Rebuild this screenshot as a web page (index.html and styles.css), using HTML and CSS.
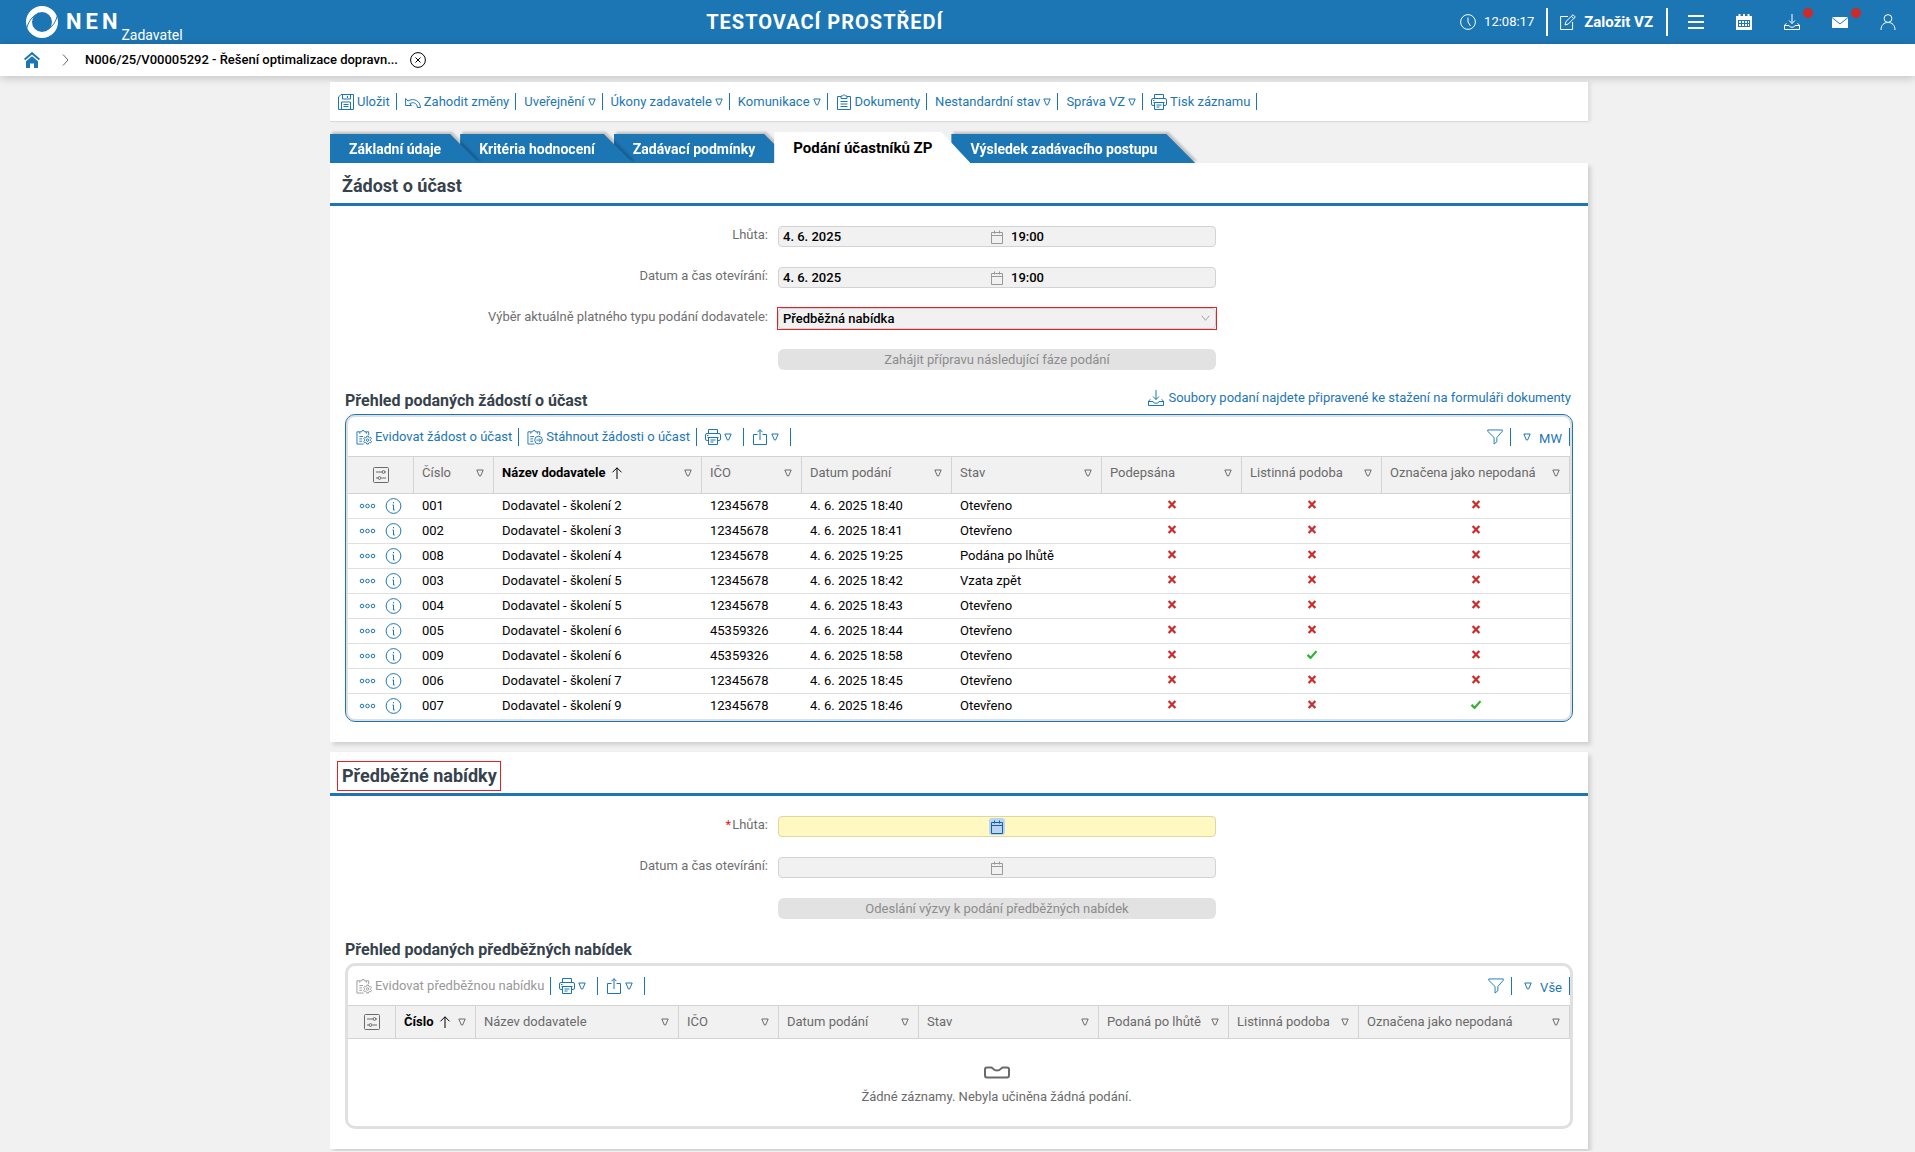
FILE: index.html
```html
<!DOCTYPE html>
<html lang="cs">

<head>
  <meta charset="UTF-8">
  <meta name="viewport" content="width=device-width, initial-scale=1">
  <title>NEN - Podání účastníků ZP</title>
  <link rel="stylesheet" href="styles.css">
</head>

<body>
  <svg class="sprite" aria-hidden="true">
    <symbol id="i-tri" viewBox="0 0 8 8">
      <path d="M.8 1h6.4L4.6 7H3.4z" />
    </symbol>
    <symbol id="i-save" viewBox="0 0 16 16">
      <path d="M3 .5h12.500v15H.5V3zM4.500.5v4.500h8V.5M9.500 2v2M3.500 15.500V8h9v7.500M5.500 10.500h5M5.500 12.500h5" />
    </symbol>
    <symbol id="i-undo" viewBox="0 0 16 16">
      <path d="M.6 4.500v7h6L4.800 9.700C8 7.500 12 9 12.500 13.500h2.900C15.500 7 8.500 3.500 3 7z" />
    </symbol>
    <symbol id="i-doc" viewBox="0 0 14 16">
      <path d="M4 2.500H.5v13h13v-13H10M4 4.500V2h1.500L7 .5 8.500 2H10v2.500zM3.500 7.500h7M3.500 10h7M3.500 12.500h7" />
    </symbol>
    <symbol id="i-print" viewBox="0 0 16 16">
      <path d="M3.500 4.500v-4h9v4M3.500 11.500H2A1.500 1.500 0 0 1 .5 10V6A1.500 1.500 0 0 1 2 4.500h12A1.500 1.500 0 0 1 15.500 6v4a1.500 1.500 0 0 1-1.500 1.500h-1.500M3.500 8.500h9v7h-9zM5.500 11h5M5.500 13h3M2 6.500h1.500M2.500 8.500h11" />
    </symbol>
    <symbol id="i-share" viewBox="0 0 14 16">
      <path d="M4.500 5.500h-4v10h13v-10h-4M7 11V.8M4.500 3.200 7 .7l2.500 2.500" />
    </symbol>
    <symbol id="i-clip-gear" viewBox="0 0 17 16">
      <path d="M4 2.500H1v13h7M4 4.500v-2h2A1.500 1.500 0 0 1 9 2.500h2v2M11 2.500h2.500V6M3.500 7.500h4M3.500 10h3M3.500 12.500h3" />
      <circle cx="12.300" cy="11.300" r="1.300" />
      <path d="m11.500 7-.2 1.200-1 .6-1.200-.4-.9 1.500.9.800v1.200l-.9.800.9 1.500 1.200-.4 1 .6.200 1.100h1.700l.2-1.100 1-.6 1.200.4.800-1.500-.9-.8v-1.200l.9-.8-.8-1.500-1.200.4-1-.6-.2-1.200z" />
    </symbol>
    <symbol id="i-clip-arrow" viewBox="0 0 17 16">
      <path d="M4 2.500H1v13h7M4 4.500v-2h2A1.500 1.500 0 0 1 9 2.500h2v2M11 2.500h2.500V6M3.500 7.500h4M3.500 10h3M3.500 12.500h3" />
      <circle cx="12.300" cy="11.300" r="4.100" />
      <path d="M10 11.300h4.500M12.800 9.500l1.800 1.800-1.800 1.800" />
    </symbol>
    <symbol id="i-download" viewBox="0 0 16 16">
      <path d="M8 0v9.500M5 6.500l3 3 3-3M2.500 9.500.5 11v4.500h15V11l-2-1.500M.5 11.500H5c.3 1.300 1.500 1.700 3 1.700s2.700-.4 3-1.700h4.500" />
    </symbol>
    <symbol id="i-funnel" viewBox="0 0 17 17">
      <path d="M.8 1h15.400v1.500L10.500 9v4.500L7.500 16V9L.8 2.500z" />
    </symbol>
    <symbol id="i-options" viewBox="0 0 16 16">
      <rect x=".5" y=".5" width="15" height="15" rx="1" />
      <path d="M3 5h6M12 5h1M3 11h2M8.500 11H13" />
      <circle cx="10.500" cy="5" r="1.400" />
      <circle cx="6.500" cy="11" r="1.400" />
    </symbol>
    <symbol id="i-up" viewBox="0 0 12 12">
      <path d="M6 12V.8M1.500 5.300 6 .8l4.500 4.500" />
    </symbol>
    <symbol id="i-more" viewBox="0 0 16 6">
      <circle cx="2.500" cy="3" r="1.800" />
      <circle cx="8" cy="3" r="1.800" />
      <circle cx="13.500" cy="3" r="1.800" />
    </symbol>
    <symbol id="i-info" viewBox="0 0 16 16">
      <circle cx="8" cy="8" r="7.400" />
      <path d="M8 4v1.300M7 7h1v5h1.200" />
    </symbol>
    <symbol id="i-cal" viewBox="0 0 12 14">
      <path d="M.5 2.500h11v11H.5zM.5 5.500h11M3.500.5v3M8.500.5v3" />
    </symbol>
    <symbol id="i-x" viewBox="0 0 8 8">
      <path d="m1 .8 6 6.400M7 .8 1 7.200" />
    </symbol>
    <symbol id="i-check" viewBox="0 0 10 8">
      <path d="m1 4.300 2.700 2.700L9 1" />
    </symbol>
  </svg>

  <header class="topbar">
    <a class="brand" href="#">
      <svg class="brand__mark" viewBox="0 0 32 32" aria-hidden="true">
        <circle cx="16" cy="16" r="13" />
        <path d="M0 25C2 16 5 11 13 7M32 7c-2 9-5 14-13 18" />
      </svg>
      <span class="brand__name">NEN</span>
      <span class="brand__role">Zadavatel</span>
    </a>
    <p class="topbar__env">TESTOVACÍ PROSTŘEDÍ</p>
    <div class="topbar__tools">
      <div class="clock">
        <svg class="icon" viewBox="0 0 16 16" aria-hidden="true">
          <circle cx="8" cy="8" r="7.400" />
          <path d="M8 3.500V8l2.500 4" />
        </svg>
        <time>12:08:17</time>
      </div>
      <button class="create" type="button">
        <svg class="icon" viewBox="0 0 16 16" aria-hidden="true">
          <path d="M8 2.500H.6v13h12V8M5 11l1-3.500L13 .7l2.300 2.300-7 7zM11.500 2.300l2.300 2.300" />
        </svg>
        Založit VZ
      </button>
      <button class="tool" type="button" aria-label="Menu">
        <svg class="icon icon--thick" viewBox="0 0 16 16" aria-hidden="true">
          <path d="M0 2h16M0 8h16M0 14h16" />
        </svg>
      </button>
      <button class="tool" type="button" aria-label="Kalendář">
        <svg class="icon" viewBox="0 0 16 16" aria-hidden="true">
          <path class="solid" d="M0 2h16v14H0z" />
          <path class="solid" d="M2.500 0h2v2h-2zM7 0h2v2H7zM11.500 0h2v2h-2z" />
          <path class="cut" d="M2 6.500h12M2 9.500h12M2 12.500h12M2.500 6v7M5.500 6v7M8.500 6v7M11.500 6v7M13.500 6v7" />
        </svg>
      </button>
      <button class="tool" type="button" aria-label="Stažené soubory">
        <svg class="icon" aria-hidden="true"><use href="#i-download" /></svg>
        <span class="dot"></span>
      </button>
      <button class="tool" type="button" aria-label="Zprávy">
        <svg class="icon" viewBox="0 0 16 16" aria-hidden="true">
          <path class="solid" d="M0 3h16v11H0z" />
          <path class="cut" d="m0 3.500 8 6.500 8-6.500" />
        </svg>
        <span class="dot"></span>
      </button>
      <button class="tool" type="button" aria-label="Uživatel">
        <svg class="icon" viewBox="0 0 16 16" aria-hidden="true">
          <circle cx="8" cy="4.500" r="3.900" />
          <path d="M1 16c0-5 3-7.500 7-7.500s7 2.500 7 7.500" />
        </svg>
      </button>
    </div>
  </header>

  <nav class="crumbs" aria-label="Drobečková navigace">
    <a class="crumbs__home" href="#" aria-label="Domů">
      <svg viewBox="0 0 16 16" aria-hidden="true">
        <path class="roof" d="M.6 7.500 8 1.200l7.400 6.300" />
        <path d="M2 9.300 8 4.300l6 5V16h-4v-4.500H6V16H2z" />
      </svg>
    </a>
    <svg class="crumbs__sep" viewBox="0 0 6 12" aria-hidden="true">
      <path d="M.5.5 5.500 6l-5 5.500" />
    </svg>
    <a class="crumbs__item" href="#">N006/25/V00005292 - Řešení optimalizace dopravn...</a>
    <button class="crumbs__close" type="button" aria-label="Zavřít">
      <svg viewBox="0 0 16 16" aria-hidden="true">
        <circle cx="8" cy="8" r="7.400" />
        <path d="m5.500 5.500 5 5M10.500 5.500l-5 5" />
      </svg>
    </button>
  </nav>

  <main class="page">
    <div class="actions">
      <button type="button"><svg class="icon"><use href="#i-save" /></svg>Uložit</button>
      <button type="button"><svg class="icon"><use href="#i-undo" /></svg>Zahodit změny</button>
      <button type="button">Uveřejnění<svg class="tri"><use href="#i-tri" /></svg></button>
      <button type="button">Úkony zadavatele<svg class="tri"><use href="#i-tri" /></svg></button>
      <button type="button">Komunikace<svg class="tri"><use href="#i-tri" /></svg></button>
      <button type="button"><svg class="icon"><use href="#i-doc" /></svg>Dokumenty</button>
      <button type="button">Nestandardní stav<svg class="tri"><use href="#i-tri" /></svg></button>
      <button type="button">Správa VZ<svg class="tri"><use href="#i-tri" /></svg></button>
      <button type="button"><svg class="icon"><use href="#i-print" /></svg>Tisk záznamu</button>
    </div>

    <nav class="tabs" aria-label="Záložky">
      <div class="tab tab--first"><a href="#">Základní údaje</a></div>
      <div class="tab tab--second"><a href="#">Kritéria hodnocení</a></div>
      <div class="tab"><a href="#">Zadávací podmínky</a></div>
      <div class="tab tab--active"><a href="#" aria-current="page">Podání účastníků ZP</a></div>
      <div class="tab"><a href="#">Výsledek zadávacího postupu</a></div>
    </nav>

    <section class="panel">
      <header class="panel__head">
        <h2>Žádost o účast</h2>
      </header>
      <form class="form">
        <div class="form__row">
          <label for="lhuta1">Lhůta:</label>
          <div class="datetime">
            <input type="text" id="lhuta1" value="4. 6. 2025" readonly>
            <button type="button" aria-label="Vybrat datum" disabled><svg><use href="#i-cal" /></svg></button>
            <input type="text" value="19:00" aria-label="Čas" readonly>
          </div>
        </div>
        <div class="form__row">
          <label for="otevirani1">Datum a čas otevírání:</label>
          <div class="datetime">
            <input type="text" id="otevirani1" value="4. 6. 2025" readonly>
            <button type="button" aria-label="Vybrat datum" disabled><svg><use href="#i-cal" /></svg></button>
            <input type="text" value="19:00" aria-label="Čas" readonly>
          </div>
        </div>
        <div class="form__row">
          <label for="typ">Výběr aktuálně platného typu podání dodavatele:</label>
          <div class="choice">
            <select id="typ">
              <option>Předběžná nabídka</option>
            </select>
            <svg viewBox="0 0 10 6" aria-hidden="true"><path d="m.8.5 4.200 5 4.200-5" /></svg>
          </div>
        </div>
        <div class="form__row">
          <button class="submit" type="button" disabled>Zahájit přípravu následující fáze podání</button>
        </div>
      </form>

      <div class="list-head">
        <h3>Přehled podaných žádostí o účast</h3>
        <a class="files" href="#"><svg class="icon"><use href="#i-download" /></svg>Soubory podaní najdete připravené ke stažení na formuláři dokumenty</a>
      </div>

      <div class="grid grid--active">
        <div class="grid__bar">
          <button type="button"><svg class="icon"><use href="#i-clip-gear" /></svg>Evidovat žádost o účast</button>
          <button type="button"><svg class="icon"><use href="#i-clip-arrow" /></svg>Stáhnout žádosti o účast</button>
          <button class="menu" type="button" aria-label="Tisk"><svg class="icon"><use href="#i-print" /></svg><svg class="tri"><use href="#i-tri" /></svg></button>
          <button class="menu" type="button" aria-label="Export"><svg class="icon"><use href="#i-share" /></svg><svg class="tri"><use href="#i-tri" /></svg></button>
          <button class="filter" type="button" aria-label="Filtr"><svg class="icon"><use href="#i-funnel" /></svg></button>
          <button class="view" type="button"><svg class="tri"><use href="#i-tri" /></svg><span>MW</span></button>
        </div>
        <table>
          <colgroup>
            <col class="w66">
            <col class="w80">
            <col class="w208">
            <col class="w100">
            <col class="w150">
            <col class="w150">
            <col class="w140">
            <col class="w140">
            <col>
          </colgroup>
          <thead>
            <tr>
              <th class="opts"><svg class="icon"><use href="#i-options" /></svg></th>
              <th><div>Číslo<svg class="tri"><use href="#i-tri" /></svg></div></th>
              <th class="sorted"><div>Název dodavatele<svg class="up"><use href="#i-up" /></svg><svg class="tri"><use href="#i-tri" /></svg></div></th>
              <th><div>IČO<svg class="tri"><use href="#i-tri" /></svg></div></th>
              <th><div>Datum podání<svg class="tri"><use href="#i-tri" /></svg></div></th>
              <th><div>Stav<svg class="tri"><use href="#i-tri" /></svg></div></th>
              <th><div>Podepsána<svg class="tri"><use href="#i-tri" /></svg></div></th>
              <th><div>Listinná podoba<svg class="tri"><use href="#i-tri" /></svg></div></th>
              <th><div>Označena jako nepodaná<svg class="tri"><use href="#i-tri" /></svg></div></th>
            </tr>
          </thead>
          <tbody id="rows"></tbody>
        </table>
      </div>
    </section>

    <section class="panel panel--next">
      <header class="panel__head">
        <h2 class="marked">Předběžné nabídky</h2>
      </header>
      <form class="form">
        <div class="form__row">
          <label for="lhuta2"><span class="req">*</span>Lhůta:</label>
          <div class="datetime datetime--required">
            <input type="text" id="lhuta2">
            <button type="button" aria-label="Vybrat datum"><svg><use href="#i-cal" /></svg></button>
            <input type="text" aria-label="Čas">
          </div>
        </div>
        <div class="form__row">
          <label for="otevirani2">Datum a čas otevírání:</label>
          <div class="datetime">
            <input type="text" id="otevirani2" readonly>
            <button type="button" aria-label="Vybrat datum" disabled><svg><use href="#i-cal" /></svg></button>
            <input type="text" aria-label="Čas" readonly>
          </div>
        </div>
        <div class="form__row">
          <button class="submit" type="button" disabled>Odeslání výzvy k podání předběžných nabídek</button>
        </div>
      </form>

      <div class="list-head">
        <h3>Přehled podaných předběžných nabídek</h3>
      </div>

      <div class="grid">
        <div class="grid__bar">
          <button type="button" disabled><svg class="icon"><use href="#i-clip-gear" /></svg>Evidovat předběžnou nabídku</button>
          <button class="menu" type="button" aria-label="Tisk"><svg class="icon"><use href="#i-print" /></svg><svg class="tri"><use href="#i-tri" /></svg></button>
          <button class="menu" type="button" aria-label="Export"><svg class="icon"><use href="#i-share" /></svg><svg class="tri"><use href="#i-tri" /></svg></button>
          <button class="filter" type="button" aria-label="Filtr"><svg class="icon"><use href="#i-funnel" /></svg></button>
          <button class="view" type="button"><svg class="tri"><use href="#i-tri" /></svg><span>Vše</span></button>
        </div>
        <table class="low">
          <colgroup>
            <col class="w48">
            <col class="w80">
            <col class="w203">
            <col class="w100">
            <col class="w140">
            <col class="w180">
            <col class="w130">
            <col class="w130">
            <col>
          </colgroup>
          <thead>
            <tr>
              <th class="opts"><svg class="icon"><use href="#i-options" /></svg></th>
              <th class="sorted"><div>Číslo<svg class="up"><use href="#i-up" /></svg><svg class="tri"><use href="#i-tri" /></svg></div></th>
              <th><div>Název dodavatele<svg class="tri"><use href="#i-tri" /></svg></div></th>
              <th><div>IČO<svg class="tri"><use href="#i-tri" /></svg></div></th>
              <th><div>Datum podání<svg class="tri"><use href="#i-tri" /></svg></div></th>
              <th><div>Stav<svg class="tri"><use href="#i-tri" /></svg></div></th>
              <th><div>Podaná po lhůtě<svg class="tri"><use href="#i-tri" /></svg></div></th>
              <th><div>Listinná podoba<svg class="tri"><use href="#i-tri" /></svg></div></th>
              <th><div>Označena jako nepodaná<svg class="tri"><use href="#i-tri" /></svg></div></th>
            </tr>
          </thead>
        </table>
        <div class="empty">
          <svg viewBox="0 0 26 12" aria-hidden="true">
            <path d="M3 1h4c2 0 2 3 6 3s4-3 6-3h4c1.500 0 2 .5 2 2v6c0 1.500-.5 2-2 2H3c-1.500 0-2-.5-2-2V3c0-1.500.5-2 2-2z" />
          </svg>
          <p>Žádné záznamy. Nebyla učiněna žádná podání.</p>
        </div>
      </div>
    </section>
  </main>

  <script src="script.js"></script>
</body>

</html>
```

FILE: styles.css
```css
* {
  margin: 0;
  padding: 0;
  box-sizing: border-box;
}

body {
  background-color: #f1f1f1;
  font-family: Roboto, "Liberation Sans", sans-serif;
  font-size: 13px;
  line-height: 16px;
  color: #000;
}

a {
  color: inherit;
  text-decoration: none;
}

button,
input,
select {
  font: inherit;
  color: inherit;
  background: none;
  border: 0;
  border-radius: 0;
}

button {
  cursor: pointer;
}

button:disabled {
  cursor: default;
}

svg {
  flex: none;
  fill: none;
  stroke: currentColor;
}

.sprite {
  display: none;
}

.icon {
  width: 16px;
  height: 16px;
}

.icon--thick {
  stroke-width: 2;
}

.tri {
  width: 8px;
  height: 8px;
}

/* horní lišta */
.topbar {
  display: flex;
  align-items: center;
  height: 44px;
  padding: 0 11px 0 26px;
  background-color: #1d76b4;
  color: #fff;
}

.brand {
  display: flex;
  align-items: center;
  align-self: stretch;
}

.brand__mark {
  width: 32px;
  height: 32px;
}

.brand__mark circle {
  stroke-width: 6;
}

.brand__mark path {
  stroke: #1d76b4;
}

.brand__name {
  margin-left: 8px;
  font-size: 22px;
  font-weight: 700;
  letter-spacing: 4px;
}

.brand__role {
  align-self: flex-end;
  font-size: 14px;
  line-height: 18px;
}

.topbar__env {
  flex: 1;
  padding-left: 7px;
  font-size: 20px;
  font-weight: 700;
  letter-spacing: 1px;
  text-align: center;
}

.topbar__tools {
  display: flex;
  align-items: center;
}

.topbar__tools .solid {
  fill: #fff;
  stroke: none;
}

.topbar__tools .cut {
  stroke: #1d76b4;
}

.clock {
  display: flex;
  align-items: center;
  gap: 8px;
  margin-right: 12px;
}

.create {
  display: flex;
  align-items: center;
  gap: 8px;
  height: 28px;
  padding: 0 13px 0 12px;
  border-left: 2px solid #fff;
  border-right: 2px solid #fff;
  font-size: 15px;
  font-weight: 700;
}

.tool {
  position: relative;
  display: flex;
  align-items: center;
  justify-content: center;
  width: 48px;
  height: 44px;
}

.tool:last-child {
  width: 32px;
  margin-left: 8px;
}

.create + .tool {
  margin-left: 4px;
}

.dot {
  position: absolute;
  top: 8px;
  right: 3px;
  width: 10px;
  height: 10px;
  border-radius: 50%;
  background-color: #cf2a2a;
}

/* drobečková navigace */
.crumbs {
  display: flex;
  align-items: center;
  height: 32px;
  padding-left: 24px;
  background-color: #fff;
  box-shadow: 0 2px 10px #0003;
}

.crumbs__home svg {
  display: block;
  width: 16px;
  height: 16px;
  fill: #1d76b4;
  stroke: none;
}

.crumbs__home .roof {
  fill: none;
  stroke: #1d76b4;
  stroke-width: 2;
}

.crumbs__sep {
  width: 7px;
  height: 12px;
  margin: 0 16px 0 22px;
  color: #666;
}

.crumbs__item {
  font-weight: 500;
}

.crumbs__close {
  margin-left: 12px;
}

.crumbs__close svg {
  display: block;
  width: 16px;
  height: 16px;
}

/* obsah */
.page {
  max-width: 1261px;
  margin: 6px auto 2px;
  padding-left: 3px;
}

.actions {
  display: flex;
  align-items: center;
  height: 40px;
  border-bottom: 1px solid #dcdcdc;
  background-color: #fff;
  box-shadow: 3px 0 3px #0001;
  color: #1d76b4;
}

.actions button,
.grid__bar button {
  display: flex;
  align-items: center;
  gap: 3px;
  padding: 0 6px 0 8px;
  border-right: 1px solid #1d76b4;
  white-space: nowrap;
}

.actions button {
  height: 17px;
}

/* záložky */
.tabs {
  display: flex;
  align-items: flex-end;
  margin-top: 10px;
}

.tab {
  position: relative;
  margin-right: -19px;
  filter: drop-shadow(2px -2px 1px #0003);
}

.tab--first {
  z-index: 2;
}

.tab--second {
  z-index: 1;
}

.tab a {
  display: block;
  height: 29px;
  padding: 0 38px 0 19px;
  background-color: #1d76b4;
  clip-path: polygon(0 0, calc(100% - 29px) 0, 100% 100%, 0 100%);
  font-size: 14px;
  font-weight: 700;
  line-height: 30px;
  color: #fff;
}

.tab--active {
  z-index: 3;
  filter: none;
}

.tab--active a {
  height: 31px;
  background-color: #fff;
  font-size: 15px;
  line-height: 32px;
  color: #000;
}

.panel {
  padding-bottom: 20px;
  background-color: #fff;
  box-shadow: 3px 3px 4px #0002;
}

.panel--next {
  margin-top: 10px;
  padding-top: 1px;
}

.panel__head {
  display: flex;
  align-items: flex-start;
  height: 43px;
  padding: 9px 8px 0;
  border-bottom: 3px solid #1d76b4;
}

.panel__head h2 {
  padding: 0 4px;
  font-size: 18px;
  font-weight: 700;
  line-height: 28px;
  color: #36424c;
}

.panel__head .marked {
  padding: 0 3px 0 4px;
  outline: 1px solid #e32227;
}

.form {
  display: grid;
  gap: 20px;
  padding-top: 20px;
}

.form__row {
  display: grid;
  grid-template-columns: minmax(0, 438fr) minmax(0, 438fr) minmax(0, 362fr);
  column-gap: 10px;
  height: 21px;
}

.form__row label {
  line-height: 17px;
  text-align: right;
  color: #6e6e6e;
}

.req {
  margin-right: 1px;
  color: #d9251d;
}

.datetime {
  display: grid;
  grid-template-columns: 1fr 16px 1fr;
  align-items: center;
  border: 1px solid #d3d3d3;
  border-radius: 4px;
  background-color: #f1f1f1;
}

.datetime input {
  width: 100%;
  padding: 0 4px;
  font-weight: 500;
}

.datetime button + input {
  padding-left: 6px;
}

.datetime button {
  display: grid;
  place-items: center;
  height: 17px;
  color: #999;
}

.datetime svg {
  width: 12px;
  height: 14px;
}

.datetime--required {
  border-color: #ddd7a4;
  background-color: #fff8c1;
}

.datetime--required button {
  border-radius: 3px;
  background-color: #b9d5f1;
  color: #1a5fa3;
}

.choice {
  position: relative;
  outline: 1px solid #e32227;
}

.choice select {
  display: block;
  width: 100%;
  height: 21px;
  padding: 0 4px;
  appearance: none;
  border: 1px solid #d3d3d3;
  border-radius: 4px;
  background-color: #f1f1f1;
  font-weight: 500;
}

.choice svg {
  position: absolute;
  top: 7px;
  right: 6px;
  width: 9px;
  height: 6px;
  color: #999;
}

.submit {
  grid-column: 2;
  border-radius: 6px;
  background-color: #e2e2e2;
  color: #8c8c8c;
}

.list-head {
  display: flex;
  align-items: center;
  justify-content: space-between;
  height: 24px;
  margin: 20px 17px 0 15px;
}

.list-head h3 {
  font-size: 16px;
  font-weight: 700;
  line-height: 22px;
  padding-bottom: 2px;
  color: #36424c;
}

.files {
  display: flex;
  gap: 4px;
  margin-bottom: 8px;
  color: #1d76b4;
}

/* tabulka */
.grid {
  margin: 0 15px;
  border: 3px solid #dfe0e1;
  border-radius: 10px;
  overflow: hidden;
}

.grid--active {
  box-shadow: inset 0 0 0 2px #dfe0e1;
  border: 1px solid #1d76b4;
  padding: 2px;
}

.grid__bar {
  display: flex;
  align-items: center;
  height: 39px;
  color: #1d76b4;
}

.grid__bar button {
  height: 18px;
}

.grid__bar button:disabled {
  color: #999;
}

.grid__bar .menu {
  padding-right: 11px;
}

.grid__bar .filter {
  margin-left: auto;
  padding-right: 7px;
}

.grid__bar .view {
  gap: 8px;
  padding: 0 7px 0 12px;
}

.view span {
  padding-top: 5px;
}

table {
  width: 100%;
  table-layout: fixed;
  border-spacing: 0;
}

.w48 {
  width: 48px;
}

.w66 {
  width: 66px;
}

.w80 {
  width: 80px;
}

.w100 {
  width: 100px;
}

.w130 {
  width: 130px;
}

.w140 {
  width: 140px;
}

.w150 {
  width: 150px;
}

.w180 {
  width: 180px;
}

.w203 {
  width: 203px;
}

.w208 {
  width: 208px;
}

th {
  height: 38px;
  padding: 0 9px 4px 8px;
  border: solid #d3d3d3;
  border-width: 1px 1px 1px 0;
  background-color: #f1f1f1;
  font-weight: 400;
  text-align: left;
  white-space: nowrap;
  color: #6a6a6a;
}

.low th {
  height: 34px;
  padding-bottom: 0;
}

th div {
  display: flex;
  align-items: center;
}

th .tri {
  margin-left: auto;
}

th .up {
  width: 12px;
  height: 12px;
  margin-left: 5px;
}

.opts {
  padding: 0;
  text-align: center;
}

.opts .icon {
  display: block;
  margin: 0 auto;
}

.sorted {
  font-weight: 700;
  color: #000;
}

.sorted .tri {
  color: #6a6a6a;
}

td {
  height: 25px;
  padding: 0 8px;
  border-bottom: 1px solid #dfe0e1;
}

tr:last-child td {
  border-bottom-color: transparent;
}

.row-tools {
  padding: 0 0 0 11px;
}

.row-tools div {
  display: flex;
  align-items: center;
  gap: 9px;
  color: #1d76b4;
}

.row-tools svg {
  display: block;
  width: 17px;
}

.row-tools .more svg {
  height: 6px;
}

.row-tools .info svg {
  height: 16px;
}

.mark {
  padding: 0 0 3px;
  text-align: center;
}

.mark svg {
  display: block;
  width: 12px;
  height: 9px;
  margin: 0 auto;
  stroke-width: 2;
}

.mark .no {
  color: #cf2a2a;
}

.mark .yes {
  color: #2fb52f;
}

.empty {
  display: flex;
  flex-direction: column;
  align-items: center;
  gap: 10px;
  padding: 27px 0 21px 75px;
  color: #6a6a6a;
}

.empty svg {
  width: 26px;
  height: 13px;
  stroke-width: 2;
}
```

FILE: script.js
```js
const zaznamy = [
  ['001', 'Dodavatel - školení 2', '12345678', '4. 6. 2025 18:40', 'Otevřeno', false, false, false],
  ['002', 'Dodavatel - školení 3', '12345678', '4. 6. 2025 18:41', 'Otevřeno', false, false, false],
  ['008', 'Dodavatel - školení 4', '12345678', '4. 6. 2025 19:25', 'Podána po lhůtě', false, false, false],
  ['003', 'Dodavatel - školení 5', '12345678', '4. 6. 2025 18:42', 'Vzata zpět', false, false, false],
  ['004', 'Dodavatel - školení 5', '12345678', '4. 6. 2025 18:43', 'Otevřeno', false, false, false],
  ['005', 'Dodavatel - školení 6', '45359326', '4. 6. 2025 18:44', 'Otevřeno', false, false, false],
  ['009', 'Dodavatel - školení 6', '45359326', '4. 6. 2025 18:58', 'Otevřeno', false, true, false],
  ['006', 'Dodavatel - školení 7', '12345678', '4. 6. 2025 18:45', 'Otevřeno', false, false, false],
  ['007', 'Dodavatel - školení 9', '12345678', '4. 6. 2025 18:46', 'Otevřeno', false, false, true]
];

const tools = `<td class="row-tools"><div>
  <button class="more" type="button" aria-label="Akce"><svg><use href="#i-more" /></svg></button>
  <button class="info" type="button" aria-label="Detail"><svg><use href="#i-info" /></svg></button>
</div></td>`;

function cell(value) {
  if (value === true) return '<td class="mark"><svg class="yes" role="img" aria-label="Ano"><use href="#i-check" /></svg></td>';
  if (value === false) return '<td class="mark"><svg class="no" role="img" aria-label="Ne"><use href="#i-x" /></svg></td>';
  return '<td>' + value + '</td>';
}

document.getElementById('rows').innerHTML = zaznamy
  .map(row => '<tr>' + tools + row.map(cell).join('') + '</tr>')
  .join('');
```
